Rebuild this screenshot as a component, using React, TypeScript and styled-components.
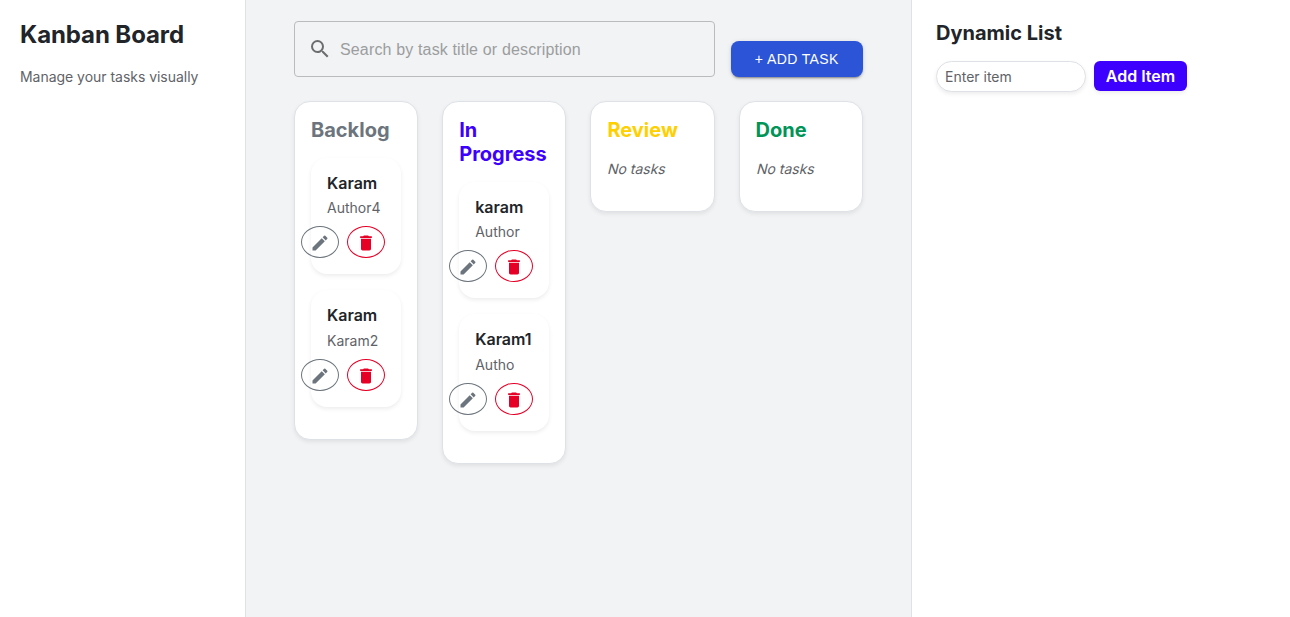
import React from "react";
import styled, { createGlobalStyle } from "styled-components";
import { MdDelete, MdEdit, MdSearch } from "react-icons/md";

const GlobalStyle = createGlobalStyle`
  *, *::before, *::after { box-sizing: border-box; }
  body {
    margin: 0;
    font-family: Inter, "Liberation Sans", sans-serif;
    font-size: 16px;
    line-height: 1.5;
    color: #212529;
    background: #fff;
  }
  h1, h2, h3, p { margin: 0; }
`;

const Page = styled.div`
  display: grid;
  grid-template-columns: 246px 665px 1fr;
  height: 617px;
  overflow: hidden;
`;

const Sidebar = styled.aside`
  padding: 20px;
  border-right: 1px solid #dee2e6;
`;

const AppTitle = styled.h1`
  font-size: 24px;
  line-height: 30px;
  font-weight: 700;
  letter-spacing: -0.1px;
`;

const AppSubtitle = styled.p`
  margin-top: 16px;
  font-size: 14px;
  line-height: 21px;
  letter-spacing: -0.03px;
  color: #5f6368;
`;

const Main = styled.main`
  background: #f1f3f5;
  padding: 21px 48.2px 0 48px;
`;

const Toolbar = styled.div`
  display: flex;
  align-items: flex-end;
  gap: 16px;
  margin-bottom: 24px;
`;

const SearchBox = styled.label`
  flex: 1;
  min-width: 0;
  height: 56px;
  display: flex;
  align-items: center;
  gap: 8px;
  padding: 0 13px;
  border: 1px solid #b9bbbd;
  border-radius: 4px;
  color: #6c6d6e;
`;

const SearchInput = styled.input`
  flex: 1;
  min-width: 0;
  padding: 0;
  border: 0;
  outline: 0;
  background: transparent;
  font: 400 16px/23px "Liberation Sans", Arial, sans-serif;
  letter-spacing: 0.15px;
  color: #212529;
  &::placeholder { color: #9c9d9e; opacity: 1; }
`;

const AddTaskButton = styled.button`
  width: 132px;
  height: 36px;
  padding: 0;
  border: 0;
  border-radius: 8px;
  background: #2b54d7;
  color: #fff;
  font: 500 14px/24.5px "Liberation Sans", Arial, sans-serif;
  letter-spacing: 0.4px;
  box-shadow: 0 3px 1px -2px rgba(0, 0, 0, 0.2), 0 2px 2px rgba(0, 0, 0, 0.14),
    0 1px 5px rgba(0, 0, 0, 0.12);
`;

const Board = styled.div`
  display: grid;
  grid-template-columns: repeat(4, minmax(0, 1fr));
  align-items: start;
  gap: 24px;
`;

const Column = styled.section`
  padding: 16px;
  border: 1px solid #dee2e6;
  border-radius: 16px;
  background: #fff;
  box-shadow: 0 2px 4px rgba(0, 0, 0, 0.075);
`;

const ColumnTitle = styled.h2<{ $color: string }>`
  margin-bottom: 16px;
  font-size: 20px;
  line-height: 24px;
  font-weight: 700;
  color: ${(p) => p.$color};
`;

/* Slants the upright face, which keeps the two-storey "a". */
const EmptyText = styled.p`
  margin-bottom: 16px;
  font-size: 14px;
  line-height: 21px;
  transform: skewX(-14deg);
  transform-origin: 0 15.5px;
  color: #5f6368;
`;

const Card = styled.article`
  margin-bottom: 16px;
  padding: 16px;
  border-radius: 16px;
  background: #fff;
  box-shadow: 0 2px 4px rgba(0, 0, 0, 0.075);
`;

const CardTitle = styled.h3`
  margin-bottom: 4px;
  font-size: 16px;
  line-height: 19.2px;
  font-weight: 600;
`;

const CardText = styled.p`
  margin-bottom: 8px;
  font-size: 14px;
  line-height: 21px;
  color: #5f6368;
`;

const Actions = styled.div`
  display: flex;
  justify-content: flex-end;
  gap: 8px;
`;

const IconButton = styled.button<{ $color: string }>`
  flex: none;
  display: flex;
  align-items: center;
  justify-content: center;
  width: 38px;
  height: 32.2px;
  padding: 2px 0 0;
  border: 1px solid ${(p) => p.$color};
  border-radius: 50%;
  background: transparent;
  color: ${(p) => p.$color};
`;

const ListPanel = styled.aside`
  padding: 21px 24px;
  border-left: 1px solid #dee2e6;
`;

const PanelTitle = styled.h2`
  margin-bottom: 16px;
  font-size: 20px;
  line-height: 24px;
  font-weight: 700;
`;

const ItemForm = styled.div`
  display: flex;
  gap: 8px;
`;

const ItemInput = styled.input`
  width: 150px;
  height: 31px;
  padding: 0 8px;
  border: 1px solid #dee2e6;
  border-radius: 16px;
  outline: 0;
  font: 400 14px/21px Inter, sans-serif;
  box-shadow: 0 2px 4px rgba(0, 0, 0, 0.075);
  &::placeholder { color: #5f6368; opacity: 1; }
`;

const AddItemButton = styled.button`
  width: 93px;
  height: 30px;
  padding: 0;
  border: 0;
  border-radius: 6px;
  background: #3d00ff;
  color: #fff;
  font: 600 16px/24px Inter, sans-serif;
  box-shadow: 0 2px 4px rgba(0, 0, 0, 0.075);
`;

type Task = { title: string; text: string };

const columns: { name: string; color: string; tasks: Task[] }[] = [
  {
    name: "Backlog",
    color: "#6c757d",
    tasks: [
      { title: "Karam", text: "Author4" },
      { title: "Karam", text: "Karam2" },
    ],
  },
  {
    name: "In Progress",
    color: "#3d00ff",
    tasks: [
      { title: "karam", text: "Author" },
      { title: "Karam1", text: "Autho" },
    ],
  },
  { name: "Review", color: "#ffd000", tasks: [] },
  { name: "Done", color: "#009557", tasks: [] },
];

function TaskCard({ title, text }: Task) {
  return (
    <Card>
      <CardTitle>{title}</CardTitle>
      <CardText>{text}</CardText>
      <Actions>
        <IconButton $color="#6c757d" aria-label="Edit">
          <MdEdit size={20} />
        </IconButton>
        <IconButton $color="#e60026" aria-label="Delete">
          <MdDelete size={20} />
        </IconButton>
      </Actions>
    </Card>
  );
}

export default function App() {
  return (
    <Page>
      <GlobalStyle />
      <Sidebar>
        <AppTitle>Kanban Board</AppTitle>
        <AppSubtitle>Manage your tasks visually</AppSubtitle>
      </Sidebar>
      <Main>
        <Toolbar>
          <SearchBox>
            <MdSearch size={24} />
            <SearchInput placeholder="Search by task title or description" />
          </SearchBox>
          <AddTaskButton>+ ADD TASK</AddTaskButton>
        </Toolbar>
        <Board>
          {columns.map((column) => (
            <Column key={column.name}>
              <ColumnTitle $color={column.color}>{column.name}</ColumnTitle>
              {column.tasks.length === 0 && <EmptyText>No tasks</EmptyText>}
              {column.tasks.map((task) => (
                <TaskCard key={task.text} {...task} />
              ))}
            </Column>
          ))}
        </Board>
      </Main>
      <ListPanel>
        <PanelTitle>Dynamic List</PanelTitle>
        <ItemForm>
          <ItemInput placeholder="Enter item" />
          <AddItemButton>Add Item</AddItemButton>
        </ItemForm>
      </ListPanel>
    </Page>
  );
}
